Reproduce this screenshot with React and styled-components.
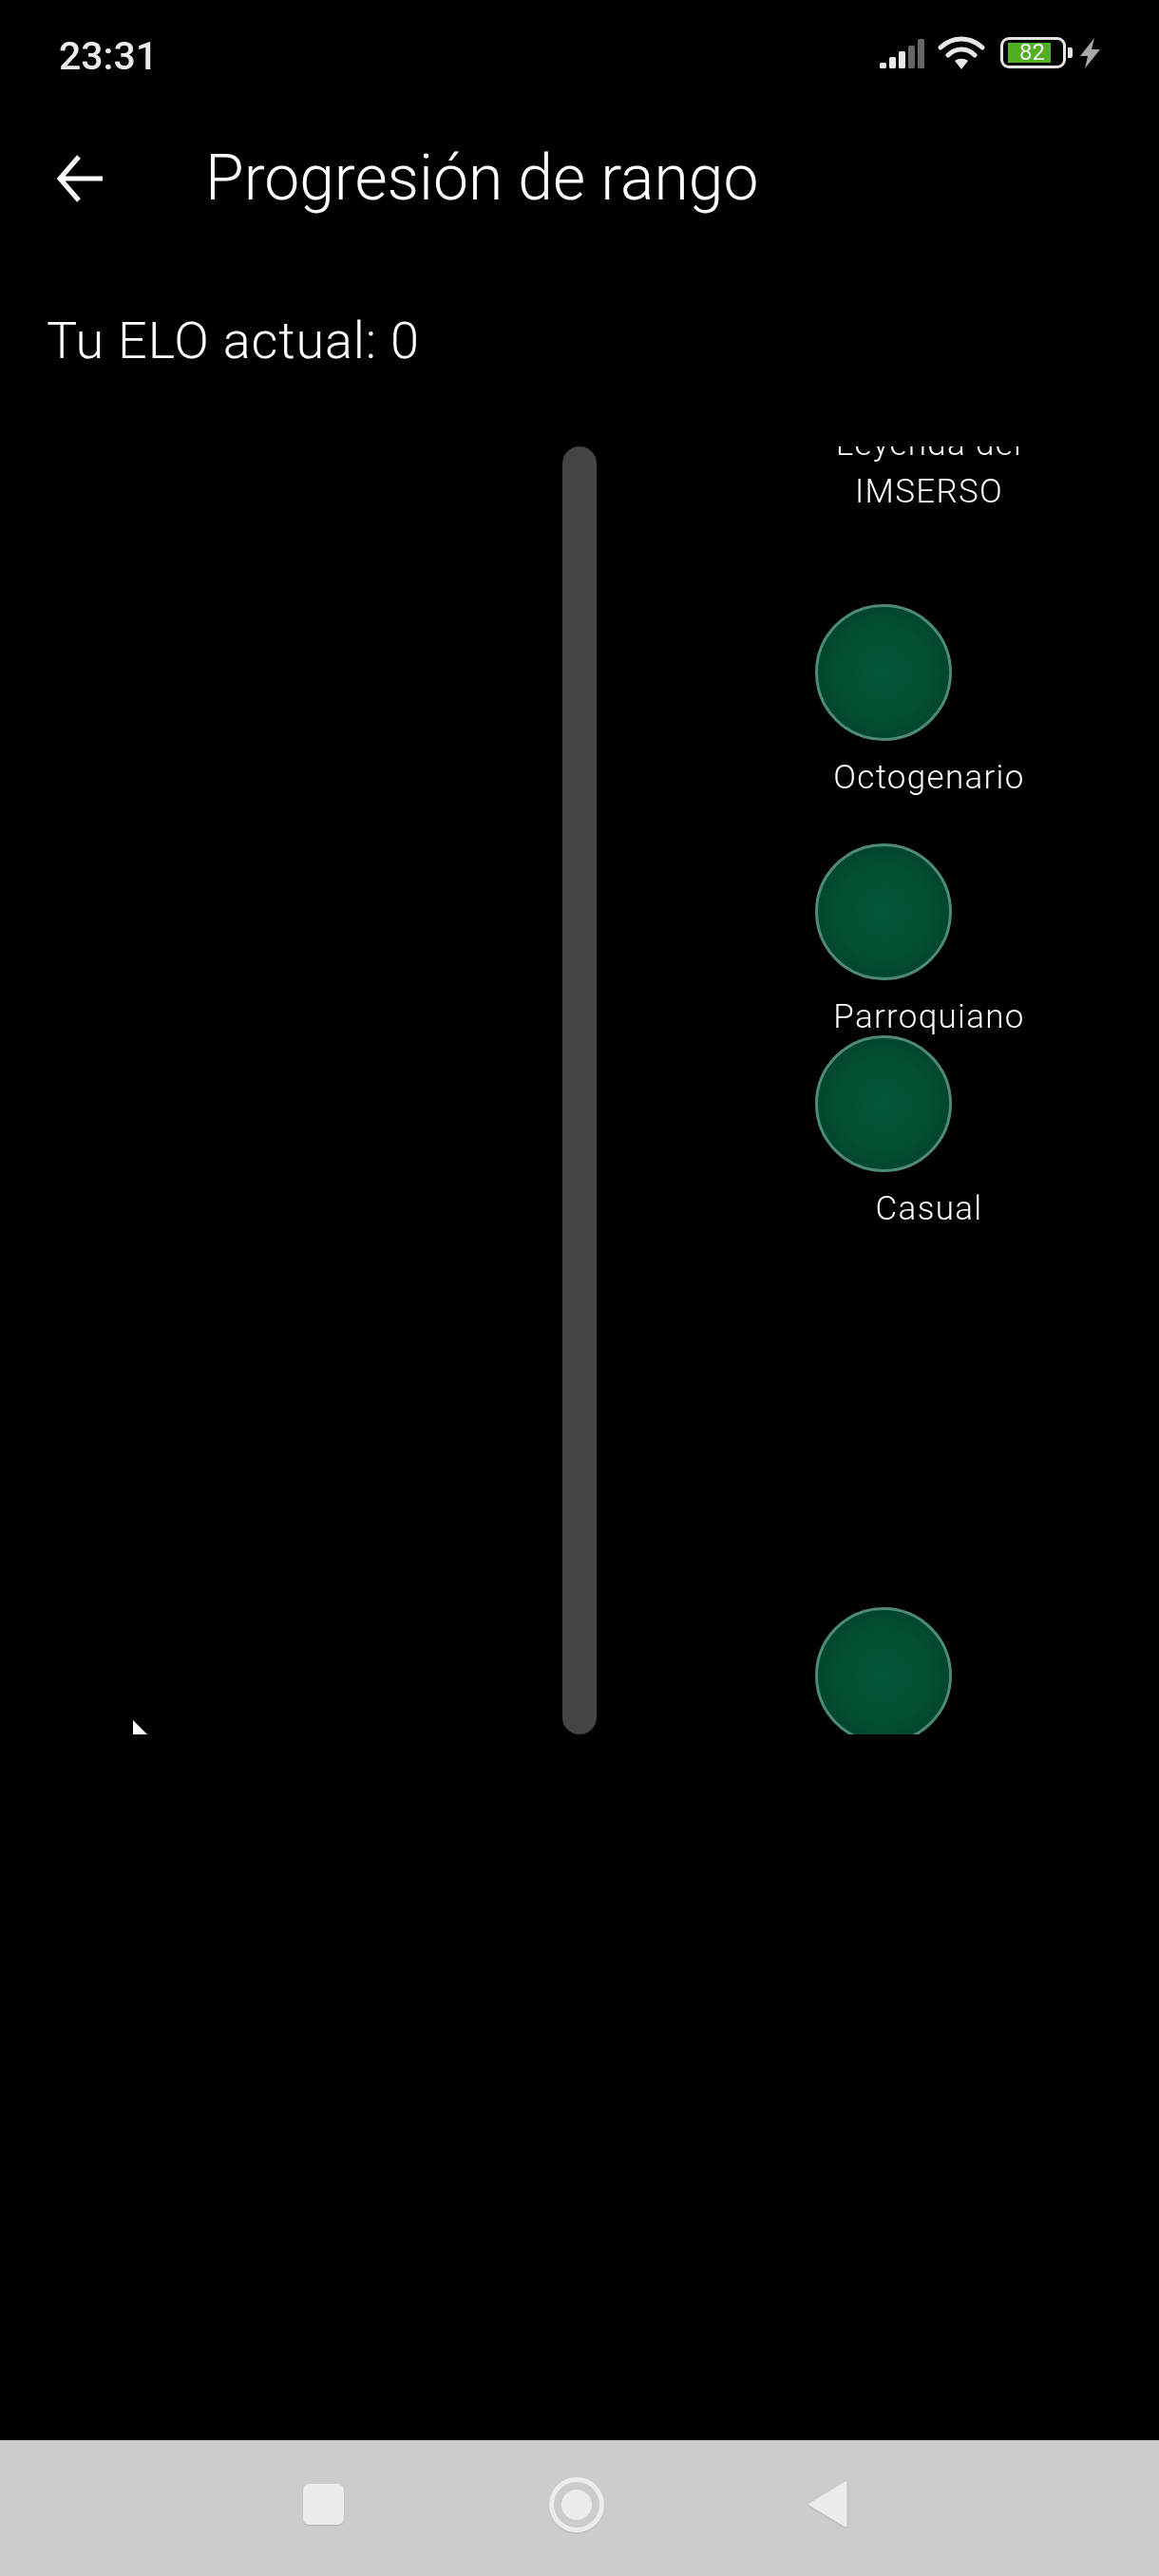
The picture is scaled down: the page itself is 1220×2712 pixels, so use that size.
import styled, { createGlobalStyle, css } from "styled-components";

const Global = createGlobalStyle`
  html, body {
    margin: 0;
    padding: 0;
    background: #000;
  }
  * {
    box-sizing: border-box;
  }
`;

// the app renders its text with greyscale antialiasing, a layer gives the same
const greyText = css`
  will-change: transform;
`;

const ranks = [
  { name: "Leyenda del IMSERSO", top: -185 },
  { name: "Octogenario", top: 166 },
  { name: "Parroquiano", top: 418 },
  { name: "Casual", top: 620 },
  { name: "", top: 1222 },
];

const App = () => {
  return (
    <>
      <Global />
      <Screen>
        <StatusBar>
          <Clock>23:31</Clock>
          <StatusIcons>
            <svg width="47" height="31" viewBox="0 0 47 31">
              <rect x="0" y="25" width="7" height="6" rx="1.5" fill="#e8e8e8" />
              <rect x="10" y="19" width="7" height="12" rx="1.5" fill="#e8e8e8" />
              <rect x="20" y="13" width="7" height="18" rx="1.5" fill="#e8e8e8" />
              <rect x="30" y="7" width="7" height="24" rx="1.5" fill="#666" />
              <rect x="40" y="0" width="7" height="31" rx="1.5" fill="#666" />
            </svg>
            <WifiIcon width="50" height="36" viewBox="0 0 50 36">
              <path d="M3 13 C16 1 34 1 47 13" fill="none" stroke="#e8e8e8" strokeWidth="5" strokeLinecap="round" />
              <path d="M11 21 C19 13 31 13 39 21" fill="none" stroke="#e8e8e8" strokeWidth="5" strokeLinecap="round" />
              <path d="M18 27 C22 24 28 24 32 27 L25 36 Z" fill="#e8e8e8" />
            </WifiIcon>
            <Battery>
              <BatteryFill>82</BatteryFill>
            </Battery>
            <BatteryNub />
            <BoltIcon width="21" height="32" viewBox="0 0 21 32">
              <path d="M15 0 L0 19 L8 19 L5 32 L21 12 L12 12 Z" fill="#a8a8a8" />
            </BoltIcon>
          </StatusIcons>
        </StatusBar>

        <AppBar>
          <BackIcon width="50" height="50" viewBox="0 0 50 50">
            <path d="M50 25 H6 M25 2 L5 25 L25 48" fill="none" stroke="#fff" strokeWidth="5" />
          </BackIcon>
          <Title>Progresión de rango</Title>
        </AppBar>

        <EloText>Tu ELO actual: 0</EloText>

        <Track>
          <Rail />
          {ranks.map((rank) => (
            <RankNode key={rank.top} $top={rank.top}>
              <RankCircle />
              <RankLabel>{rank.name}</RankLabel>
            </RankNode>
          ))}
          <Marker />
        </Track>

        <NavBar>
          <NavSquare />
          <NavHome>
            <NavHomeDot />
          </NavHome>
          <NavBack width="41" height="49" viewBox="0 0 41 49">
            <path d="M39 2 L2 24.5 L39 47 Z" fill="#ececec" stroke="#ececec" strokeWidth="3" strokeLinejoin="round" />
          </NavBack>
        </NavBar>
      </Screen>
    </>
  );
};

const Screen = styled.div`
  width: 1220px;
  height: 2712px;
  background: #000;
  color: #fff;
  font-family: Roboto, "Liberation Sans", sans-serif;
  display: flex;
  flex-direction: column;
  overflow: hidden;
`;

const StatusBar = styled.div`
  ${greyText}
  height: 134px;
  flex: none;
  padding: 38px 62px 0 62px;
  display: flex;
  justify-content: space-between;
  align-items: flex-start;
`;

const Clock = styled.div`
  font-size: 41px;
  line-height: 42px;
  font-weight: 500;
  color: #ececec;
`;

const StatusIcons = styled.div`
  display: flex;
  align-items: flex-start;
  padding-top: 3px;
`;

const WifiIcon = styled.svg`
  margin: -4px 0 0 14px;
`;

const Battery = styled.div`
  width: 69px;
  height: 33px;
  margin: -2px 0 0 16px;
  padding: 3px 5px;
  border: 3px solid #e4e4e4;
  border-radius: 9px;
`;

const BatteryFill = styled.div`
  width: 45px;
  height: 21px;
  background: #52b01e;
  color: #f2f2f2;
  font-size: 24px;
  line-height: 21px;
  font-weight: 400;
  text-align: right;
  padding-right: 6px;
`;

const BatteryNub = styled.div`
  width: 5px;
  height: 11px;
  margin: 9px 0 0 2px;
  background: #e4e4e4;
  border-radius: 0 2px 2px 0;
`;

const BoltIcon = styled.svg`
  margin: -1px 0 0 8px;
`;

const AppBar = styled.div`
  ${greyText}
  height: 108px;
  flex: none;
  padding: 0 0 0 58px;
  display: flex;
  align-items: center;
`;

const BackIcon = styled.svg`
  flex: none;
`;

const Title = styled.h1`
  margin: 0 0 0 108px;
  font-size: 66px;
  line-height: 78px;
  font-weight: 300;
  color: #fff;
`;

const EloText = styled.div`
  ${greyText}
  height: 228px;
  flex: none;
  padding: 85px 0 0 49px;
  font-size: 54px;
  line-height: 64px;
  font-weight: 300;
  letter-spacing: 0.85px;
`;

const Track = styled.div`
  ${greyText}
  position: relative;
  height: 1356px;
  flex: none;
  overflow: hidden;
`;

const Rail = styled.div`
  position: absolute;
  top: 0;
  bottom: 0;
  left: 592px;
  width: 36px;
  border-radius: 18px;
  background: #444;
`;

const RankNode = styled.div`
  position: absolute;
  left: 858px;
  top: ${({ $top }) => $top}px;
  width: 240px;
  display: flex;
  flex-direction: column;
`;

const RankCircle = styled.div`
  position: relative;
  z-index: 1;
  width: 144px;
  height: 144px;
  border-radius: 50%;
  border: 3px solid #4f8a74;
  background: radial-gradient(circle closest-side, #02593b 0%, #03502f 70%, #03462e 100%);
`;

const RankLabel = styled.div`
  margin-top: 14px;
  font-size: 35px;
  line-height: 50px;
  font-weight: 300;
  letter-spacing: 1.3px;
  text-align: center;
`;

const Marker = styled.div`
  position: absolute;
  left: 140px;
  bottom: 0;
  width: 15px;
  height: 15px;
  background: #fff;
  clip-path: polygon(0 0, 100% 100%, 0 100%);
`;

const NavBar = styled.div`
  margin-top: auto;
  height: 143px;
  background: #ccc;
  padding: 0 328px 8px 319px;
  display: flex;
  align-items: center;
  justify-content: space-between;
`;

const NavSquare = styled.div`
  width: 43px;
  height: 43px;
  border-radius: 7px;
  background: #ececec;
  box-shadow: 0 1px 2px rgba(0, 0, 0, 0.12);
`;

const NavHome = styled.div`
  width: 58px;
  height: 58px;
  border-radius: 50%;
  border: 5px solid #ececec;
  box-shadow: 0 1px 2px rgba(0, 0, 0, 0.12);
  display: flex;
  align-items: center;
  justify-content: center;
`;

const NavHomeDot = styled.div`
  width: 32px;
  height: 32px;
  border-radius: 50%;
  background: #ececec;
`;

const NavBack = styled.svg`
  filter: drop-shadow(0 1px 1px rgba(0, 0, 0, 0.12));
`;

export default App;
